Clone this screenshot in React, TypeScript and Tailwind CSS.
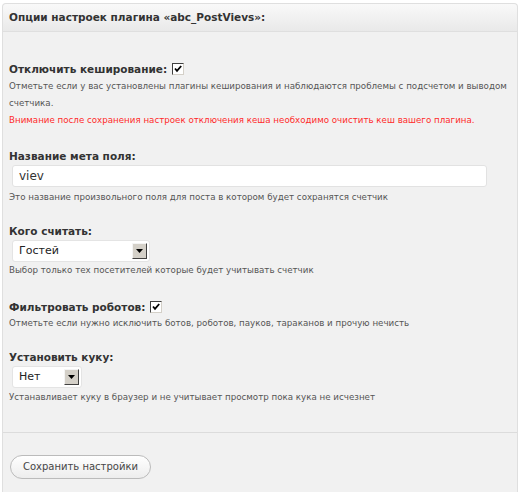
import React from "react";

const font = { fontFamily: '"DejaVu Sans", Verdana, sans-serif' };

function Check() {
  return (
    <span className="inline-block align-middle ml-[5px] w-[12px] h-[12px] bg-white border border-t-[#404040] border-l-[#404040] border-b-[#d4d0c8] border-r-[#d4d0c8] relative top-[-1px]">
      <svg viewBox="0 0 10 10" className="w-[10px] h-[10px] block">
        <path d="M2 4.5 L4 6.8 L8.2 2" stroke="#000" strokeWidth="1.8" fill="none" />
      </svg>
    </span>
  );
}

function Select({ label, width }: { label: string; width: string }) {
  return (
    <div className={`mt-[2px] ml-[3px] h-[22px] bg-white rounded-[3px] border border-[#e4e4e4] flex items-center justify-between pl-[6px] pr-[2px] ${width}`}>
      <span className="text-[11px] text-[#222]" style={font}>{label}</span>
      <span className="w-[15px] h-[16px] bg-[#d4d0c8] border border-t-[#f4f4f4] border-l-[#f4f4f4] border-b-[#404040] border-r-[#404040] flex items-center justify-center">
        <svg viewBox="0 0 7 4" className="w-[7px] h-[4px]">
          <path d="M0 0 H7 L3.5 4 Z" fill="#000" />
        </svg>
      </span>
    </div>
  );
}

export default function App() {
  const label = "text-[10.5px] font-bold text-[#333] leading-[14px] h-[14px]";
  const desc = "text-[8.7px] text-[#555] leading-[17px]";
  return (
    <div className="w-[520px] h-[492px] bg-white pt-[3px] px-[2px]" style={font}>
      <div className="h-[489px] border border-[#dfdfdf] border-b-0 rounded-t-[4px] bg-[#f1f1f1] flex flex-col">
        <div className="h-[28px] bg-gradient-to-b from-[#f9f9f9] to-[#e9e9e9] border-b border-[#dfdfdf] flex items-center pl-[6px] rounded-t-[4px]">
          <span className="text-[10.5px] font-bold text-[#333]">Опции настроек плагина «abc_PostVievs»:</span>
        </div>
        <div className="px-[6px] pt-[30px]">
          <div className={label}>
            Отключить кеширование:<Check />
          </div>
          <div className={`${desc} mt-[2px]`}>
            Отметьте если у вас установлены плагины кеширования и наблюдаются проблемы с подсчетом и выводом счетчика.
          </div>
          <div className={`${desc} text-[#ff2a2a]`}>
            Внимание после сохранения настроек отключения кеша необходимо очистить кеш вашего плагина.
          </div>

          <div className={`${label} mt-[20px]`}>Название мета поля:</div>
          <div className="mt-[2px] ml-[3px] w-[475px] h-[22px] bg-white border border-[#e2e2e2] rounded-[3px] flex items-center pl-[6px]">
            <span className="text-[12px] text-[#333]">viev</span>
          </div>
          <div className={`${desc} mt-[2px]`}>Это название произвольного поля для поста в котором будет сохранятся счетчик</div>

          <div className={`${label} mt-[18px]`}>Кого считать:</div>
          <Select label="Гостей" width="w-[138px]" />
          <div className={desc}>Выбор только тех посетителей которые будет учитывать счетчик</div>

          <div className={`${label} mt-[21px]`}>
            Фильтровать роботов:<Check />
          </div>
          <div className={`${desc} mt-[1px]`}>Отметьте если нужно исключить ботов, роботов, пауков, тараканов и прочую нечисть</div>

          <div className={`${label} mt-[18px]`}>Установить куку:</div>
          <Select label="Нет" width="w-[70px]" />
          <div className={`${desc} mt-[1px]`}>Устанавливает куку в браузер и не учитывает просмотр пока кука не исчезнет</div>
        </div>
        <div className="mt-[26px] border-t border-[#dcdcdc]" />
        <div className="px-[7px] pt-[20px]">
          <button className="h-[24px] px-[12px] rounded-full border border-[#bbb] bg-gradient-to-b from-white to-[#ededed] text-[10px] text-[#464646]" style={font}>
            Сохранить настройки
          </button>
        </div>
      </div>
    </div>
  );
}
